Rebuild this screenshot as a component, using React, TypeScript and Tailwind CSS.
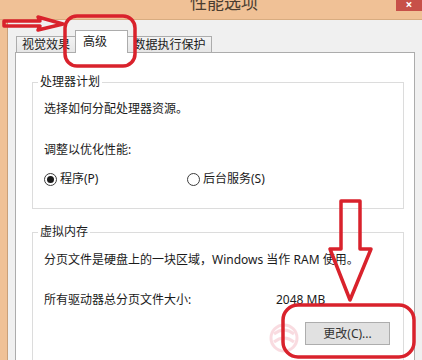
import React from 'react';

const font = "font-['Noto_Sans','Noto_Sans_CJK_SC',sans-serif]";

function Radio({ checked, label }: { checked?: boolean; label: string }) {
  return (
    <div className="flex items-center gap-[3px]">
      <div className="w-[13px] h-[13px] rounded-full border border-[#3c3c3c] bg-white flex items-center justify-center">
        {checked && <div className="w-[7px] h-[7px] rounded-full bg-[#1a1a1a]" />}
      </div>
      <span>{label}</span>
    </div>
  );
}

function Annotations() {
  return (
    <svg className="absolute inset-0 pointer-events-none" width="422" height="360" viewBox="0 0 422 360">
      {/* faint watermark */}
      <g opacity="0.18" fill="none" stroke="#e0405a" strokeWidth="3">
        <circle cx="284" cy="338" r="13" />
        <path d="M274 334 Q284 326 294 334 M274 342 Q284 334 294 342" />
      </g>
      <g fill="none" stroke="#d9222c" strokeWidth="3.5" strokeLinejoin="round">
        <path d="M4 21 L40 21 L38 17 L63 24 L38 30 L40 26 L4 26 Z" />
        <rect x="65" y="16" width="70" height="50" rx="12" />
        <path d="M341 201 L360 201 L360 249 L371 249 L350 300 L330 249 L341 249 Z" />
        <rect x="283" y="305" width="131" height="52" rx="15" />
      </g>
    </svg>
  );
}

export default function App() {
  return (
    <div className={`relative w-[422px] h-[360px] overflow-hidden bg-[#f0c196] text-[12px] leading-[16px] text-[#1a1a1a] ${font}`}>
      {/* title bar */}
      <div className="flex items-start h-[20px] border-b border-[#d8ac80]">
        <div className="pl-[190px] -mt-[6px] text-[17px] leading-[18px] text-[#4b3d30]">性能选项</div>
        <div className="ml-auto w-[26px] h-[11px] bg-[#c75048] flex items-end justify-center text-white text-[12px] leading-[12px] font-bold overflow-hidden">×</div>
      </div>

      <div className="flex h-[340px]">
        <div className="w-[8px] border-r border-[#c9a07a]" />
        <div className="flex-1 bg-[#f0f0f0] pt-[10px]">
          {/* tabs */}
          <div className="flex items-end h-[22px] pl-[8px]">
            <div className="w-[59px] h-[16px] border-t border-l border-[#acacac] bg-gradient-to-b from-[#f3f3f3] to-[#e6e6e6] text-center leading-[15px]">视觉效果</div>
            <div className="relative z-10 w-[53px] h-[23px] -mb-[1px] border-t border-l border-r border-[#acacac] bg-white pl-[7px] pt-[3px]">高级</div>
            <div className="w-[84px] h-[16px] border-t border-r border-[#acacac] bg-gradient-to-b from-[#f3f3f3] to-[#e6e6e6] text-center leading-[15px]">数据执行保护</div>
          </div>

          {/* panel */}
          <div className="ml-[7px] w-[400px] h-[320px] border border-[#acacac] bg-white">
            <fieldset className="mt-[21px] ml-[16px] w-[372px] border border-[#dcdcdc]">
              <legend className="ml-[5px] px-[2px]">处理器计划</legend>
              <div className="pl-[11px] pt-[11px] pb-[21px]">
                <div>选择如何分配处理器资源。</div>
                <div className="mt-[25px]">调整以优化性能:</div>
                <div className="mt-[13px] flex">
                  <div className="w-[143px]">
                    <Radio checked label="程序(P)" />
                  </div>
                  <Radio label="后台服务(S)" />
                </div>
              </div>
            </fieldset>

            <fieldset className="mt-[15px] ml-[16px] w-[372px] border border-[#dcdcdc]">
              <legend className="ml-[5px] px-[2px]">虚拟内存</legend>
              <div className="pl-[11px] pr-[13px] pt-[12px] pb-[40px]">
                <div>分页文件是硬盘上的一块区域，Windows 当作 RAM 使用。</div>
                <div className="mt-[24px] flex">
                  <div className="w-[232px]">所有驱动器总分页文件大小:</div>
                  <div>2048 MB</div>
                </div>
                <div className="mt-[14px] flex justify-end">
                  <button className="w-[85px] h-[23px] bg-[#e1e1e1] border border-[#adadad] text-[#333] leading-[21px]">更改(C)...</button>
                </div>
              </div>
            </fieldset>
          </div>
        </div>
      </div>

      <Annotations />
    </div>
  );
}
